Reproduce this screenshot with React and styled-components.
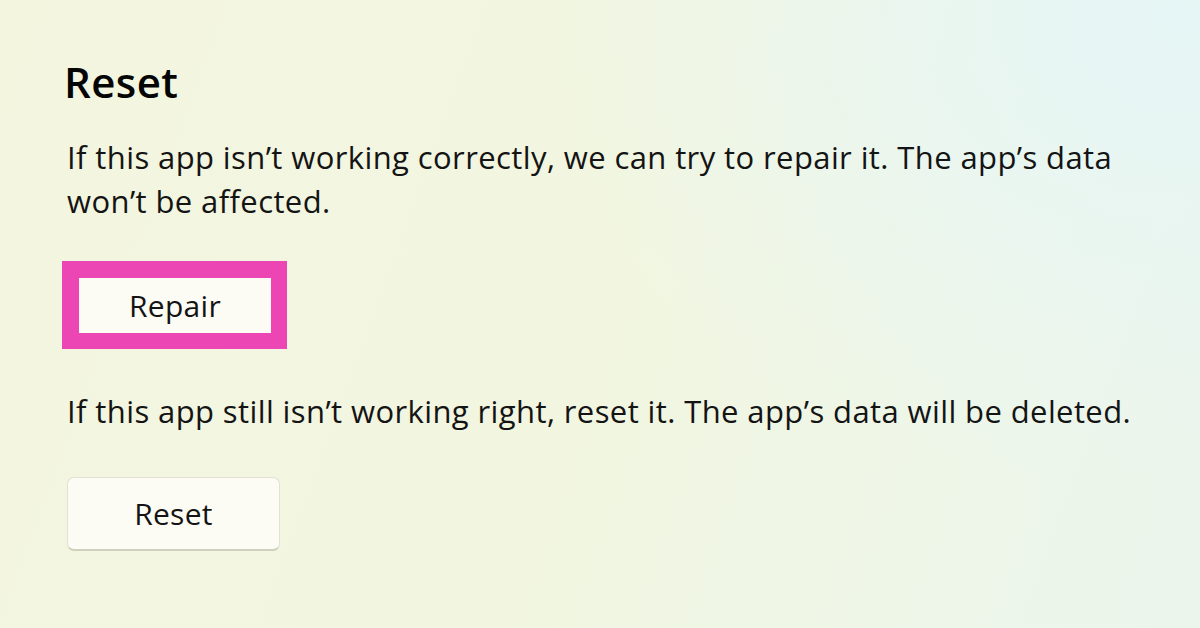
import React from 'react';
import styled, { createGlobalStyle } from 'styled-components';

const GlobalStyle = createGlobalStyle`
    html, body, #root {
        margin: 0;
        padding: 0;
        height: 100%;
    }
    body {
        font-family: "Open Sans", "Noto Sans", sans-serif;
        color: #141414;
    }
`

const Page = styled.div`
    box-sizing: border-box;
    width: 1200px;
    height: 628px;
    overflow: hidden;
    padding: 54px 0 0 64px;
    background:
        radial-gradient(ellipse 650px 480px at 1180px 20px, #e6f6f6 0%, rgba(230, 246, 246, 0) 100%),
        linear-gradient(110deg, #f3f5df 0%, #f2f6e0 50%, #eef6e8 78%, #ebf5ec 100%);
    display: flex;
    flex-direction: column;
    align-items: flex-start;
`

const Title = styled.h1`
    margin: 0;
    font-size: 42px;
    line-height: 56px;
    font-weight: 600;
    letter-spacing: 0.4px;
    color: #050505;
`

const Text = styled.p`
    margin: ${props => props.top}px 0 0 3px;
    font-size: 31px;
    line-height: 44px;
    letter-spacing: 0.4px;
    max-width: 1115px;
    color: #141414;
`

const Highlight = styled.div`
    margin-top: 38px;
    margin-left: -2px;
    padding: 17px 16px 16px 17px;
    background: #ec46b4;
`

const Button = styled.button`
    box-sizing: border-box;
    width: ${props => props.width}px;
    height: ${props => props.height}px;
    font-family: inherit;
    font-size: 30px;
    letter-spacing: 0.3px;
    color: #141414;
    background: #fcfcf5;
    border: ${props => props.plain ? 'none' : '1px solid #e1e2d2'};
    border-bottom: ${props => props.plain ? 'none' : '2px solid #cfd1bd'};
    border-radius: ${props => props.plain ? 0 : 7}px;
    padding: 0;
    display: flex;
    align-items: center;
    justify-content: center;
`

const ResetButton = styled(Button)`
    margin: 44px 0 0 3px;
`

export default function App() {
    return (
        <>
            <GlobalStyle />
            <Page>
                <Title>Reset</Title>
                <Text top={25}>
                    If this app isn’t working correctly, we can try to repair it. The app’s data won’t be affected.
                </Text>
                <Highlight>
                    <Button plain width={192} height={55}>Repair</Button>
                </Highlight>
                <Text top={40}>
                    If this app still isn’t working right, reset it. The app’s data will be deleted.
                </Text>
                <ResetButton width={213} height={74}>Reset</ResetButton>
            </Page>
        </>
    );
}
